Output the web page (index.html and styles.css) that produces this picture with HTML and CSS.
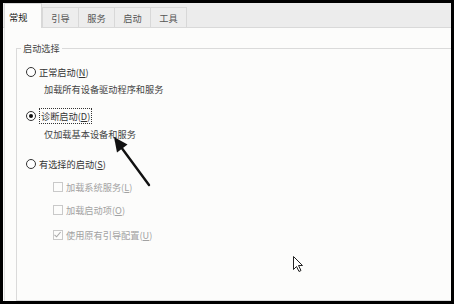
FILE: index.html
```html
<!DOCTYPE html>
<html lang="zh-CN">
<head>
    <meta charset="UTF-8">
    <title>系统配置</title>
    <link rel="stylesheet" href="styles.css">
</head>
<body>
    <div class="window">
        <div class="tabs">
            <div class="tab active">常规</div>
            <div class="tab">引导</div>
            <div class="tab">服务</div>
            <div class="tab">启动</div>
            <div class="tab last">工具</div>
        </div>
        <div class="panel">
            <fieldset class="group">
                <legend>启动选择</legend>

                <div class="option first">
                    <span class="radio"></span>
                    <span class="label">正常启动(<u>N</u>)</span>
                </div>
                <div class="desc">加载所有设备驱动程序和服务</div>

                <div class="option second">
                    <span class="radio checked"></span>
                    <span class="label focused">诊断启动(<u>D</u>)</span>
                </div>
                <div class="desc">仅加载基本设备和服务</div>

                <div class="option third">
                    <span class="radio"></span>
                    <span class="label">有选择的启动(<u>S</u>)</span>
                </div>
                <div class="check">
                    <span class="box"></span>
                    <span class="label">加载系统服务(<u>L</u>)</span>
                </div>
                <div class="check">
                    <span class="box"></span>
                    <span class="label">加载启动项(<u>O</u>)</span>
                </div>
                <div class="check last">
                    <span class="box ticked">
                        <svg width="9" height="9" viewBox="0 0 9 9"><path d="M1.5 4.8 L3.6 6.8 L7.6 2" fill="none" stroke="#a8a8a8" stroke-width="1.1"/></svg>
                    </span>
                    <span class="label">使用原有引导配置(<u>U</u>)</span>
                </div>
            </fieldset>
        </div>

        <!-- annotation arrow and mouse pointer drawn over the dialog -->
        <svg class="overlay" width="448" height="298" viewBox="3 3 448 298">
            <line x1="149" y1="185" x2="121" y2="147" stroke="#111" stroke-width="2.4" stroke-linecap="round"/>
            <polygon points="114,137 127.5,144.5 117,152.5" fill="#111"/>
            <path d="M293.5 256.5 L293.5 269.5 L296.5 266.5 L299 271.5 L301 270.5 L298.5 265.5 L302.5 265.5 Z"
                  fill="#fff" stroke="#222" stroke-width="1" stroke-linejoin="round"/>
        </svg>
    </div>
</body>
</html>
```

FILE: styles.css
```css
body {
    margin: 0;
    background-color: #000;
    font-family: "Noto Sans CJK SC", "Noto Sans", sans-serif;
    font-size: 9.2px;
    color: #333;
}

.window {
    position: relative;
    display: flex;
    flex-direction: column;
    width: 448px;
    height: 298px;
    margin: 3px;
    background-color: #fcfcfb;
}

.tabs {
    display: flex;
    align-items: flex-end;
    height: 24px;
    padding-left: 1px;
    background-color: #ececec;
    border-bottom: 1px solid #d9d9d9;
}

.tab {
    box-sizing: border-box;
    width: 36px;
    height: 20px;
    line-height: 20px;
    text-align: center;
    color: #555;
    background-color: #ededed;
    border: 1px solid #d8d8d8;
    border-bottom: none;
    border-right: none;
}

.tab.last {
    width: 37px;
    border-right: 1px solid #d8d8d8;
}

.tab.active {
    position: relative;
    width: 38px;
    height: 25px;
    margin-bottom: -1px;
    padding-left: 4px;
    line-height: 26px;
    text-align: left;
    color: #222;
    background-color: #fcfcfb;
    border-right: 1px solid #d8d8d8;
}

.panel {
    flex: 1;
    display: flex;
    margin-left: 1px;
    border-left: 1px solid #e2e2e2;
}

.group {
    flex: 1;
    margin: 13px 0 0 11px;
    padding: 9px 0 0 4px;
    border: 1px solid #dadada;
    border-right: none;
}

.group legend {
    padding: 0 2px;
    line-height: 14px;
    color: #444;
}

.option,
.check {
    display: flex;
    align-items: center;
    height: 16px;
    margin-left: 5px;
}

.option.second {
    margin-top: 11px;
}

.option.third {
    margin-top: 14px;
}

.check {
    margin-left: 32px;
    margin-top: 7px;
    color: #a2a2a2;
}

.check.last {
    margin-top: 9px;
}

.desc {
    height: 16px;
    line-height: 16px;
    margin: 1px 0 0 23px;
    color: #444;
}

.option.second + .desc {
    margin-top: 2px;
}

.radio {
    box-sizing: border-box;
    display: flex;
    align-items: center;
    justify-content: center;
    width: 10px;
    height: 10px;
    margin-right: 3px;
    border: 1px solid #333;
    border-radius: 50%;
    background-color: #fff;
}

.radio.checked::after {
    content: "";
    width: 4px;
    height: 4px;
    border-radius: 50%;
    background-color: #111;
}

.label {
    line-height: 14px;
}

.label.focused {
    padding: 0 1px;
    border: 1px dotted #333;
}

.box {
    box-sizing: border-box;
    display: flex;
    width: 10px;
    height: 10px;
    margin-right: 3px;
    border: 1px solid #c9c9c9;
    background-color: #fcfcfb;
}

.box svg {
    margin: -1px 0 0 -1px;
}

.overlay {
    position: absolute;
    top: 0;
    left: 0;
    pointer-events: none;
}
```
